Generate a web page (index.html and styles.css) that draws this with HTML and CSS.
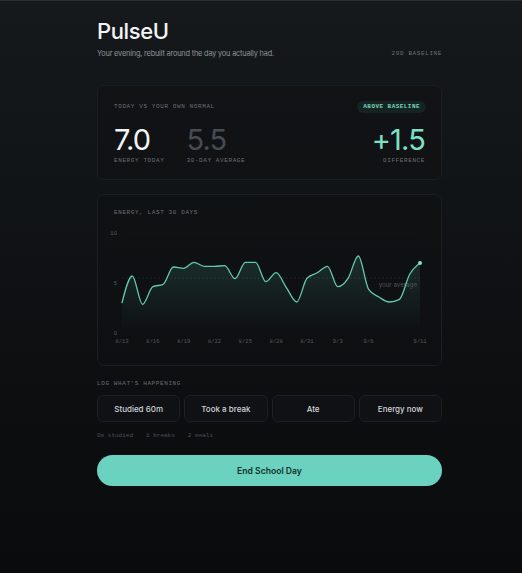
FILE: index.html
```html
<!DOCTYPE html>
<html lang="en">
<head>
<meta charset="utf-8">
<title>PulseU</title>
<link rel="stylesheet" href="styles.css">
</head>
<body>
<main class="app">
  <header class="top">
    <h1 class="brand">PulseU</h1>
    <div class="sub-row">
      <p class="tagline">Your evening, rebuilt around the day you actually had.</p>
      <span class="mono-label">29D BASELINE</span>
    </div>
  </header>

  <section class="card summary">
    <div class="summary-head">
      <span class="mono-label">TODAY VS YOUR OWN NORMAL</span>
      <span class="badge">ABOVE BASELINE</span>
    </div>
    <div class="stats">
      <div class="stat">
        <div class="num num-today">7.0</div>
        <div class="mono-label stat-label">ENERGY TODAY</div>
      </div>
      <div class="stat">
        <div class="num num-avg">5.5</div>
        <div class="mono-label stat-label">30-DAY AVERAGE</div>
      </div>
      <div class="stat stat-diff">
        <div class="num num-diff">+1.5</div>
        <div class="mono-label stat-label">DIFFERENCE</div>
      </div>
    </div>
  </section>

  <section class="card chart-card">
    <div class="mono-label chart-title">ENERGY, LAST 30 DAYS</div>
    <svg class="chart" viewBox="0 0 329 128" width="329" height="128">
      <defs>
        <linearGradient id="fillGrad" x1="0" y1="0" x2="0" y2="1">
          <stop offset="0" stop-color="#5fc9b2" stop-opacity="0.16"/>
          <stop offset="1" stop-color="#5fc9b2" stop-opacity="0"/>
        </linearGradient>
      </defs>
      <line class="grid" x1="16" y1="10" x2="314" y2="10"/>
      <line class="grid" x1="16" y1="110" x2="314" y2="110"/>
      <text class="axis" x="11" y="10" text-anchor="end" dominant-baseline="central">10</text>
      <text class="axis" x="11" y="60" text-anchor="end" dominant-baseline="central">5</text>
      <text class="axis" x="11" y="110.5" text-anchor="end" dominant-baseline="central">0</text>
      <path id="area" class="area" d=""/>
      <line class="avg" x1="16" y1="55" x2="314" y2="55"/>
      <text class="avg-label" x="311" y="61" text-anchor="end" dominant-baseline="central">your average</text>
      <path id="line" class="line" d=""/>
      <circle class="dot" cx="314" cy="40" r="2"/>
      <g class="xlabels">
        <text x="16" y="118" text-anchor="middle" dominant-baseline="central">8/13</text>
        <text x="46.83" y="118" text-anchor="middle" dominant-baseline="central">8/16</text>
        <text x="77.66" y="118" text-anchor="middle" dominant-baseline="central">8/19</text>
        <text x="108.48" y="118" text-anchor="middle" dominant-baseline="central">8/22</text>
        <text x="139.31" y="118" text-anchor="middle" dominant-baseline="central">8/25</text>
        <text x="170.14" y="118" text-anchor="middle" dominant-baseline="central">8/28</text>
        <text x="200.97" y="118" text-anchor="middle" dominant-baseline="central">8/31</text>
        <text x="231.79" y="118" text-anchor="middle" dominant-baseline="central">9/3</text>
        <text x="262.62" y="118" text-anchor="middle" dominant-baseline="central">9/6</text>
        <text x="314" y="118" text-anchor="middle" dominant-baseline="central">9/11</text>
      </g>
    </svg>
  </section>

  <section class="log">
    <div class="mono-label">LOG WHAT'S HAPPENING</div>
    <div class="actions">
      <button class="action">Studied 60m</button>
      <button class="action">Took a break</button>
      <button class="action">Ate</button>
      <button class="action">Energy now</button>
    </div>
    <div class="tally">
      <span>0m studied</span>
      <span>1 breaks</span>
      <span>2 meals</span>
    </div>
  </section>

  <button class="end">End School Day</button>
</main>
<script src="chart.js"></script>
</body>
</html>
```

FILE: styles.css
```css
* { box-sizing: border-box; margin: 0; padding: 0; }

html, body { min-height: 100%; }

body {
  min-height: 573px;
  background: linear-gradient(180deg, #16191c 0%, #121518 28%, #0d0f11 62%, #0a0b0d 100%);
  border-top: 1px solid #2a2d31;
  font-family: Inter, "Liberation Sans", sans-serif;
  color: #e8eaec;
}

.app {
  width: 345px;
  margin-left: 97px;
  padding-top: 17px;
  padding-bottom: 40px;
}

.brand {
  font-size: 22px;
  line-height: 26px;
  font-weight: 500;
  letter-spacing: -0.4px;
  color: #f3f4f5;
}

.sub-row {
  margin-top: 5px;
  display: flex;
  justify-content: space-between;
  align-items: center;
  height: 10px;
}

.tagline {
  font-size: 7.4px;
  line-height: 10px;
  letter-spacing: -0.2px;
  color: #8e939a;
}

.mono-label {
  font-family: "Liberation Mono", "DejaVu Sans Mono", monospace;
  font-size: 6px;
  line-height: 8px;
  letter-spacing: 0.6px;
  color: #6a6f76;
  white-space: nowrap;
}

.card {
  border: 1px solid #1a1d21;
  border-radius: 7px;
  background: rgba(14, 16, 19, 0.55);
}

.summary {
  margin-top: 26px;
  padding: 15px 16px 14px;
}

.summary-head {
  display: flex;
  justify-content: space-between;
  align-items: center;
  height: 12px;
}

.badge {
  font-family: "Liberation Mono", "DejaVu Sans Mono", monospace;
  font-size: 6px;
  font-weight: 700;
  letter-spacing: 0.45px;
  line-height: 12px;
  height: 12px;
  padding: 0 6px;
  margin-right: -1px;
  border-radius: 6px;
  background: #142521;
  color: #7fd3bf;
}

.stats {
  margin-top: 12px;
  display: flex;
  gap: 22px;
}

.stat-diff {
  margin-left: auto;
  text-align: right;
}

.num {
  font-size: 29px;
  line-height: 29px;
  font-weight: 400;
  letter-spacing: -0.8px;
}

.num-today { color: #f2f3f4; }
.num-avg { color: #474b52; }
.num-diff { color: #7fe0c9; }

.stat-label { margin-top: 3px; }

.chart-card {
  margin-top: 14px;
  padding: 14px 8px 14px;
}

.chart-title { padding-left: 8px; }

.chart {
  display: block;
  margin-top: 6px;
}

.grid { stroke: #ffffff; stroke-opacity: 0.035; stroke-width: 0.6; }

.axis, .xlabels text {
  font-family: "Liberation Mono", "DejaVu Sans Mono", monospace;
  font-size: 5.6px;
  fill: #52575e;
}

.area { fill: url(#fillGrad); }

.avg {
  stroke: #ffffff;
  stroke-opacity: 0.14;
  stroke-width: 0.6;
  stroke-dasharray: 2 2;
}

.avg-label {
  font-family: Inter, "Liberation Sans", sans-serif;
  font-size: 6.2px;
  fill: #50555c;
}

.line {
  fill: none;
  stroke: #62c8b1;
  stroke-width: 1.3;
  stroke-linejoin: round;
  stroke-linecap: round;
}

.dot { fill: #84e2cc; }

.log { margin-top: 14px; }

.actions {
  margin-top: 7px;
  display: grid;
  grid-template-columns: repeat(4, 1fr);
  gap: 4px;
}

.action {
  height: 27px;
  border: 1px solid #1c1f23;
  border-radius: 6px;
  background: #0f1114;
  color: #d2d5d9;
  font-family: Inter, "Liberation Sans", sans-serif;
  font-size: 8px;
  font-weight: 500;
}

.tally {
  margin-top: 10px;
  display: flex;
  gap: 13px;
  font-family: "Liberation Mono", "DejaVu Sans Mono", monospace;
  font-size: 6px;
  line-height: 8px;
  color: #4b5056;
}

.end {
  display: block;
  width: 100%;
  margin-top: 15px;
  height: 31px;
  border: none;
  border-radius: 16px;
  background: #6bd2bf;
  color: #11302a;
  font-family: Inter, "Liberation Sans", sans-serif;
  font-size: 8.6px;
  font-weight: 600;
}
```

FILE: chart.js
```js
(function () {
  var data = [3.03, 5.7, 2.87, 4.63, 4.87, 6.6, 6.47, 7.07, 6.67, 6.67,
              6.73, 5.43, 7.07, 7.07, 5.13, 6.03, 4.53, 3.1, 5.47, 6.03,
              6.67, 4.63, 5.47, 7.7, 4.37, 3.6, 3.1, 3.37, 5.87, 7.0];
  var x0 = 16, x1 = 314, n = data.length, step = (x1 - x0) / (n - 1);
  function X(i) { return x0 + i * step; }
  function Y(v) { return 110 - v * 10; }
  var px = [], py = [], i;
  for (i = 0; i < n; i++) { px.push(X(i)); py.push(Y(data[i])); }
  var s = [], t = [];
  for (i = 0; i < n - 1; i++) s.push((py[i + 1] - py[i]) / step);
  for (i = 1; i < n - 1; i++) {
    var s0 = s[i - 1], s1 = s[i], p = (s0 + s1) / 2;
    t[i] = (Math.sign(s0) + Math.sign(s1)) * Math.min(Math.abs(s0), Math.abs(s1), 0.5 * Math.abs(p)) || 0;
  }
  t[0] = (3 * s[0] - t[1]) / 2;
  t[n - 1] = (3 * s[n - 2] - t[n - 2]) / 2;
  var dx = step / 3;
  var d = 'M' + px[0].toFixed(2) + ',' + py[0].toFixed(2);
  for (i = 0; i < n - 1; i++) {
    d += 'C' + (px[i] + dx).toFixed(2) + ',' + (py[i] + dx * t[i]).toFixed(2) + ' ' +
         (px[i + 1] - dx).toFixed(2) + ',' + (py[i + 1] - dx * t[i + 1]).toFixed(2) + ' ' +
         px[i + 1].toFixed(2) + ',' + py[i + 1].toFixed(2);
  }
  document.getElementById('line').setAttribute('d', d);
  document.getElementById('area').setAttribute('d', d + 'L' + x1 + ',110L' + x0 + ',110Z');
})();
```
